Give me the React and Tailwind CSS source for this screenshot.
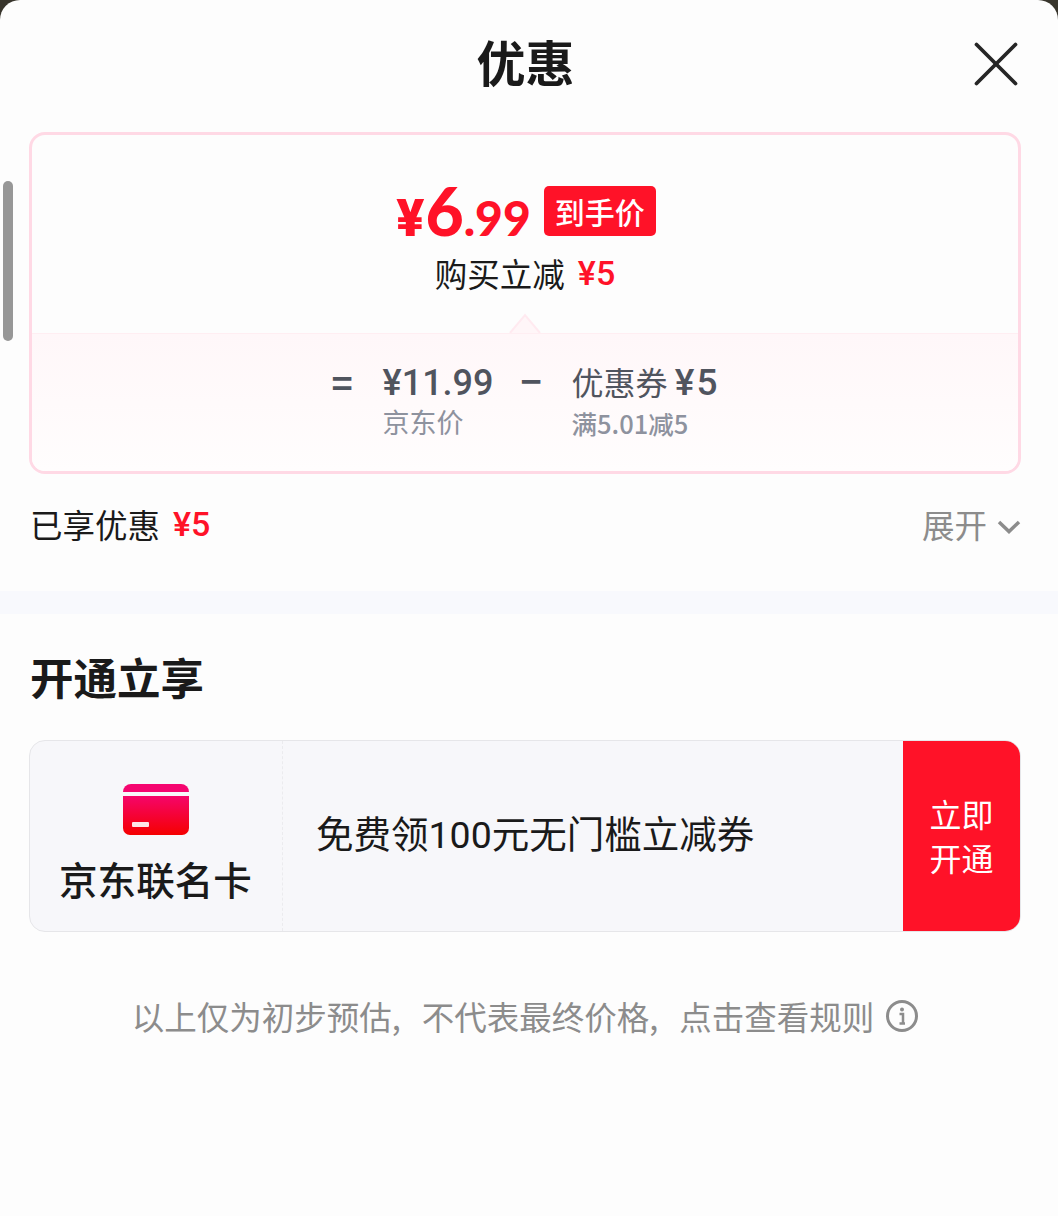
import { X } from "lucide-react"

const cjk = "font-['Noto_Sans_CJK_SC',sans-serif]"

function App() {
  return (
    <div className={`relative h-[1216px] w-[1058px] overflow-hidden bg-[#38352c] ${cjk}`}>
      <div className="relative flex h-full flex-col rounded-t-[20px] bg-[#fdfdfd]">
        <div className="absolute left-[3px] top-[181px] h-[160px] w-[10px] rounded-full bg-[#979797]"></div>

        <div className="relative flex h-[132px] shrink-0 items-start justify-center pr-[7px] pt-[27px]">
          <h1 className="text-[49px] leading-[68px] font-semibold text-[#1a1a1a]">优惠</h1>
          <X className="absolute left-[957px] top-[25px] text-[#262626]" size={78} strokeWidth={1.15} />
        </div>

        <div className="ml-[29px] mr-[37px] flex h-[342px] shrink-0 flex-col overflow-hidden rounded-[16px] border-[3px] border-[#ffd9e5]">
          <div className="relative flex h-[198px] shrink-0 flex-col items-center pt-[48px]">
            <div className="ml-[2px] flex h-[64px] items-center gap-[13px]">
              <span className="flex items-baseline font-['Lato',sans-serif] leading-[64px] font-black text-[#ff1228]">
                <span className="mr-[1px] font-['Roboto',sans-serif] text-[52px] font-black">¥</span>
                <span className="text-[66px]">6</span>
                <span className="text-[48px]">.99</span>
              </span>
              <span className="-mt-[8px] flex h-[50px] w-[112px] items-center justify-center rounded-[5px] bg-[#ff1228] text-[30px] font-medium text-white">到手价</span>
            </div>
            <div className="mt-[4px] flex items-center gap-[13px] text-[32.5px] leading-[44px] text-[#1a1a1a]">
              <span>购买立减</span>
              <span className="font-['Roboto',sans-serif] text-[34px] font-medium text-[#ff1228]">¥5</span>
            </div>
            <svg className="absolute bottom-0 left-[477px]" width="32" height="20" viewBox="0 0 32 20">
              <path d="M1 20 L16 2 L31 20 Z" fill="#fff6f8" />
              <path d="M1 20 L16 2 L31 20" fill="none" stroke="#ffeaf0" strokeWidth="2" />
            </svg>
          </div>
          <div className="flex flex-1 items-start justify-center border-t border-[#ffeef2] bg-gradient-to-b from-[#fff7f9] to-[#fffdfd] pt-[25px] pl-[1px]">
            <span className="w-[51px] text-[36px] leading-[44px] font-bold text-[#50545e]">=</span>
            <div className="flex w-[138px] flex-col">
              <span className="font-['Roboto',sans-serif] text-[36px] leading-[48px] font-medium text-[#50545e]">¥11.99</span>
              <span className="text-[27px] leading-[30px] text-[#8e929e]">京东价</span>
            </div>
            <span className="w-[51px] text-[36px] leading-[40px] font-bold text-[#50545e]">−</span>
            <div className="flex flex-col">
              <span className="text-[32px] leading-[44px] text-[#50545e]">优惠券 <span className="font-['Roboto',sans-serif] text-[37px] font-medium tracking-[2px]">¥5</span></span>
              <span className="text-[25.5px] leading-[36px] font-medium text-[#8e929e]">满5.01减5</span>
            </div>
          </div>
        </div>

        <div className="flex h-[117px] shrink-0 items-start justify-between pl-[30px] pr-[37px] pt-[27px]">
          <div className="flex items-center gap-[13px] text-[32.5px] leading-[46px] text-[#1a1a1a]">
            <span>已享优惠</span>
            <span className="font-['Roboto',sans-serif] text-[34px] font-medium text-[#ff1228]">¥5</span>
          </div>
          <div className="flex items-center gap-[10px] text-[32.5px] leading-[46px] text-[#8c8c8c]">
            <span>展开</span>
            <svg className="mt-[5px]" width="24" height="16" viewBox="0 0 24 16" fill="none">
              <path d="M2 3 L12 12.5 L22 3" stroke="#8c8c8c" strokeWidth="3.5" />
            </svg>
          </div>
        </div>

        <div className="h-[23px] shrink-0 bg-[#f8f9fd]"></div>

        <h2 className="mt-[33px] pl-[30px] text-[43.5px] leading-[60px] font-semibold text-[#1a1a1a]">开通立享</h2>

        <div className="ml-[29px] mr-[37px] mt-[33px] flex h-[192px] shrink-0 overflow-hidden rounded-[16px] border border-[#e6e6e9] bg-[#f7f7fa]">
          <div className="flex w-[253px] shrink-0 flex-col items-center border-r border-dashed border-[#ebebee] pr-[1px] pt-[42px]">
            <svg width="66" height="52" viewBox="0 0 66 52">
              <defs>
                <linearGradient id="cardFill" x1="0" y1="0" x2="0" y2="1">
                  <stop offset="0" stopColor="#f5056a" />
                  <stop offset="1" stopColor="#f50000" />
                </linearGradient>
              </defs>
              <path d="M0 9 a8 8 0 0 1 8-8 H58 a8 8 0 0 1 8 8 V9 H0 Z" fill="#f5056f" />
              <path d="M0 13 H66 V45 a7 7 0 0 1-7 7 H7 a7 7 0 0 1-7-7 Z" fill="url(#cardFill)" />
              <rect x="9" y="39" width="17" height="5" rx="1" fill="#fff" opacity="0.9" />
            </svg>
            <span className="mt-[17px] text-[38.6px] leading-[52px] font-medium text-[#1a1a1a]">京东联名卡</span>
          </div>
          <div className="flex flex-1 items-center pb-[4px] pl-[33px] text-[37.5px] text-[#1a1a1a]">
            <span>免费领<span className="font-['Roboto',sans-serif]">100</span>元无门槛立减券</span>
          </div>
          <div className="flex w-[117px] shrink-0 items-center justify-center bg-[#ff1228] pb-[2px] text-center text-[32px] leading-[44px] text-white">
            <span>立即<br />开通</span>
          </div>
        </div>

        <div className="mt-[59px] flex items-center justify-center gap-[12px] pr-[8px] text-[32.5px] leading-[50px] text-[#8c8c8c]">
          <span>以上仅为初步预估<span className="inline-block w-[30px]">,</span>不代表最终价格<span className="inline-block w-[30px]">,</span>点击查看规则</span>
          <svg width="32" height="32" viewBox="0 0 32 32" fill="none">
            <circle cx="16" cy="16" r="14.5" stroke="#8c8c8c" strokeWidth="3" />
            <circle cx="16" cy="9.5" r="2" fill="#8c8c8c" />
            <path d="M13.5 14 H17 V23 M13.5 23.5 H19" stroke="#8c8c8c" strokeWidth="2.5" />
          </svg>
        </div>
      </div>
    </div>
  )
}

export default App
